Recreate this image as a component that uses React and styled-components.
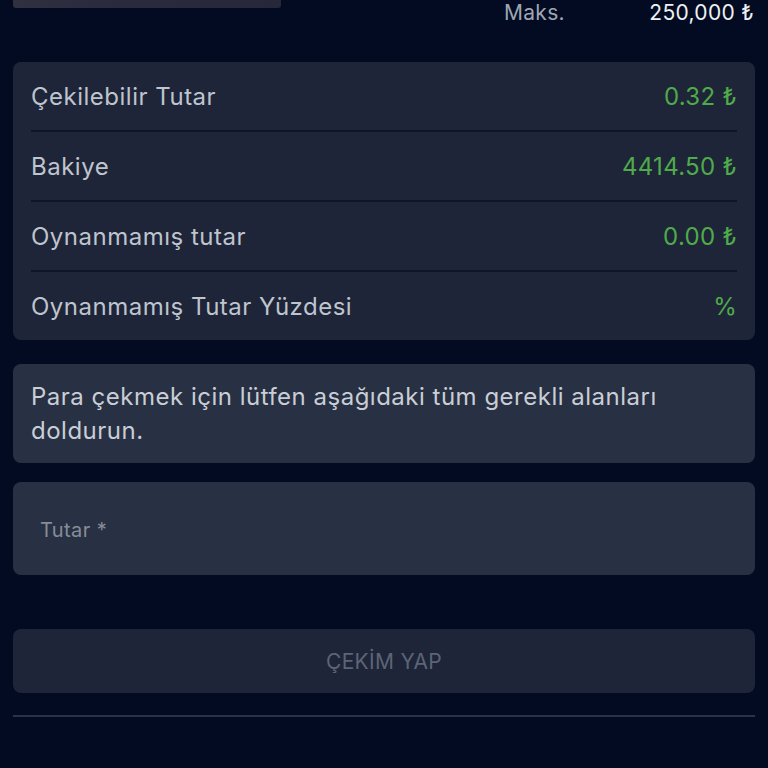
import styled, { createGlobalStyle } from 'styled-components';

const GlobalStyle = createGlobalStyle`
  html, body {
    margin: 0;
    padding: 0;
    background: #020b21;
  }
  body {
    font-family: Inter, "Noto Sans", sans-serif;
    color: #c6cbd4;
    letter-spacing: 0.3px;
    -webkit-font-smoothing: antialiased;
  }
`;

const Page = styled.div`
  width: 768px;
  height: 768px;
  overflow: hidden;
  padding: 0 13px;
  box-sizing: border-box;
`;

const TopRow = styled.div`
  display: flex;
  align-items: flex-start;
  justify-content: space-between;
  height: 62px;
`;

const Thumb = styled.div`
  width: 268px;
  height: 8px;
  border-radius: 0 0 3px 3px;
  background: linear-gradient(90deg, #2f3040 0%, #2a2b3c 30%, #26283a 100%);
`;

const MaxRow = styled.div`
  display: flex;
  justify-content: space-between;
  width: 250px;
  margin-right: 1px;
  font-size: 21px;
  line-height: 26px;
`;

const MaxLabel = styled.span`
  color: #9ea6b4;
`;

const MaxValue = styled.span`
  color: #eef0f4;
`;

const InfoCard = styled.div`
  background: #1e2538;
  border-radius: 8px;
  padding: 0 18px;
`;

const InfoRow = styled.div`
  display: flex;
  align-items: center;
  justify-content: space-between;
  height: 68px;
  font-size: 24px;
  letter-spacing: 0.5px;
  border-bottom: 2px solid #0e1528;

  &:last-child {
    border-bottom: none;
  }
`;

const RowLabel = styled.span`
  color: #bfc4ce;
`;

const RowValue = styled.span`
  color: #4fab4a;
  letter-spacing: 0.3px;
`;

const Notice = styled.div`
  margin-top: 24px;
  background: #283043;
  border-radius: 8px;
  padding: 16px 18px 15px;
  font-size: 24px;
  line-height: 34px;
  letter-spacing: 0.5px;
  color: #c9ced6;
`;

const Field = styled.label`
  display: flex;
  align-items: center;
  margin-top: 19px;
  height: 93px;
  padding: 0 27px;
  background: #283043;
  border-radius: 8px;
  box-sizing: border-box;
`;

const Input = styled.input`
  flex: 1;
  border: none;
  outline: none;
  background: transparent;
  font-family: inherit;
  font-size: 20px;
  letter-spacing: 0.4px;
  color: #e0e3e8;
  padding: 0;
  margin-top: 3px;

  &::placeholder {
    color: #868c98;
  }
`;

const SubmitButton = styled.button`
  display: block;
  width: 100%;
  margin-top: 54px;
  height: 64px;
  border: none;
  border-radius: 8px;
  background: #1e2539;
  color: #5c6476;
  font-family: inherit;
  font-size: 21px;
  letter-spacing: 0.3px;
  cursor: not-allowed;
`;

const Divider = styled.hr`
  margin: 22px 0 0;
  border: none;
  height: 2px;
  background: #2a3245;
`;

const rows = [
  { label: 'Çekilebilir Tutar', value: '0.32 ₺' },
  { label: 'Bakiye', value: '4414.50 ₺' },
  { label: 'Oynanmamış tutar', value: '0.00 ₺' },
  { label: 'Oynanmamış Tutar Yüzdesi', value: '%' },
];

export default function App() {
  return (
    <>
      <GlobalStyle />
      <Page>
        <TopRow>
          <Thumb />
          <MaxRow>
            <MaxLabel>Maks.</MaxLabel>
            <MaxValue>250,000 ₺</MaxValue>
          </MaxRow>
        </TopRow>

        <InfoCard>
          {rows.map((r) => (
            <InfoRow key={r.label}>
              <RowLabel>{r.label}</RowLabel>
              <RowValue>{r.value}</RowValue>
            </InfoRow>
          ))}
        </InfoCard>

        <Notice>
          Para çekmek için lütfen aşağıdaki tüm gerekli alanları doldurun.
        </Notice>

        <Field>
          <Input type="text" placeholder="Tutar *" />
        </Field>

        <SubmitButton disabled>ÇEKİM YAP</SubmitButton>

        <Divider />
      </Page>
    </>
  );
}
